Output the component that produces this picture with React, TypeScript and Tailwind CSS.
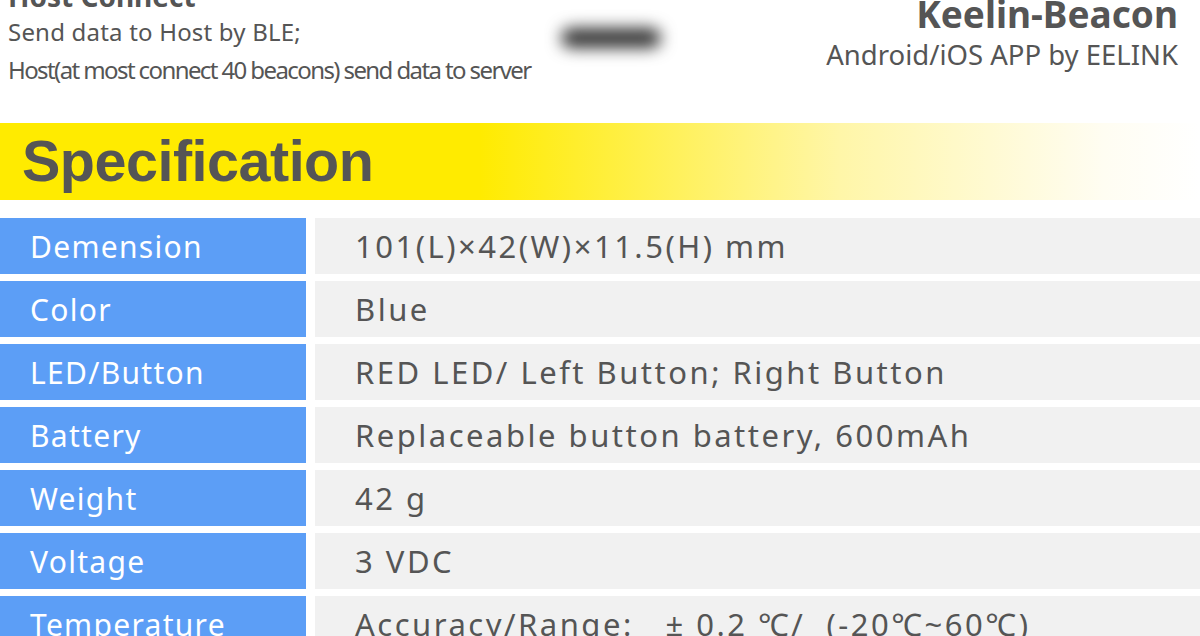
import React from 'react'

const specs: [string, string][] = [
  ['Demension', '101(L)×42(W)×11.5(H) mm'],
  ['Color', 'Blue'],
  ['LED/Button', 'RED LED/ Left Button; Right Button'],
  ['Battery', 'Replaceable button battery, 600mAh'],
  ['Weight', '42 g'],
  ['Voltage', '3 VDC'],
  ['Temperature', 'Accuracy/Range:\u00a0\u00a0 ± 0.2 ℃/\u00a0 (-20℃~60℃)'],
]

const font = { fontFamily: '"Noto Sans", "Open Sans", sans-serif' }

export default function App() {
  return (
    <div className="w-[1200px] h-[636px] overflow-hidden bg-white" style={font}>
      {/* top intro */}
      <div className="h-[123px] flex justify-between px-[8px] pr-[22px]">
        <div className="-mt-[21px] text-[#555]">
          <h3 className="text-[28px] font-bold leading-[34px]">Host Connect</h3>
          <p className="text-[24px] leading-[34px] mt-[2px] tracking-[0.2px]">Send data to Host by BLE;</p>
          <p className="text-[24px] leading-[34px] mt-[4px] tracking-[-1.6px]">
            Host(at most connect 40 beacons) send data to server
          </p>
        </div>
        <div className="pt-[28px] pl-[30px] flex-1">
          <div className="w-[100px] h-[20px] rounded-full bg-[#333] blur-[8px]" />
        </div>
        <div className="-mt-[8px] text-right text-[#555]">
          <h3 className="text-[37px] font-bold leading-[44px]">Keelin-Beacon</h3>
          <p className="text-[27.5px] leading-[36px] mt-[1px]">Android/iOS APP by EELINK</p>
        </div>
      </div>

      {/* banner */}
      <div className="h-[77px] flex items-center bg-[linear-gradient(to_right,#ffeb00_0%,#ffeb00_40%,#fff6a8_70%,#fffdf2_92%,#ffffff_100%)]">
        <h2
          className="ml-[22px] text-[57.5px] font-bold text-[#555] leading-none tracking-[-0.5px]"
          style={{ fontFamily: '"Liberation Sans", Arial, sans-serif' }}
        >
          Specification
        </h2>
      </div>

      {/* spec table */}
      <div className="mt-[18px] flex flex-col gap-[7px]">
        {specs.map(([k, v]) => (
          <div key={k} className="flex h-[56px] gap-[9px]">
            <div className="w-[306px] bg-[#5c9ef6] flex items-center pl-[30px] text-white text-[30px] tracking-[1.3px]">
              {k}
            </div>
            <div className="flex-1 bg-[#f1f1f1] flex items-center pl-[40px] text-[#555] text-[31px] tracking-[2.5px] whitespace-pre">
              {v}
            </div>
          </div>
        ))}
      </div>
    </div>
  )
}
